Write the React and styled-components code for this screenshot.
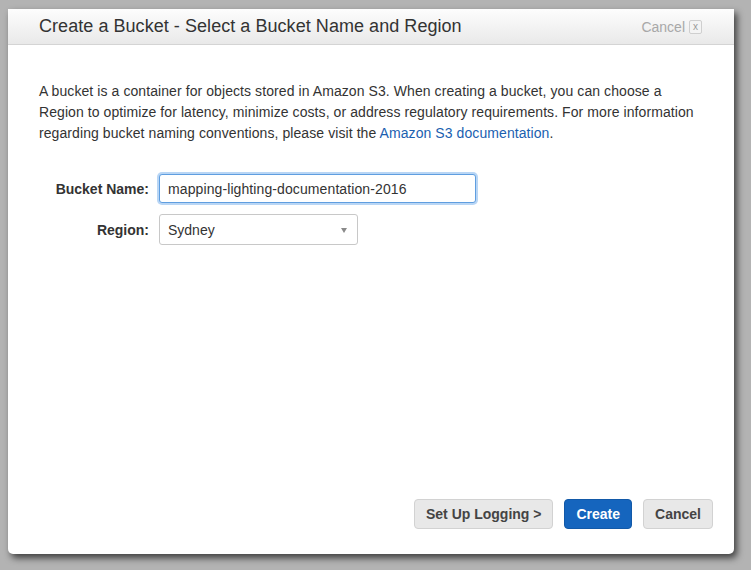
import React from "react";
import styled, { createGlobalStyle } from "styled-components";

const GlobalStyle = createGlobalStyle`
  html, body {
    margin: 0;
    padding: 0;
    background: #b3b3b3;
  }
  body {
    font-family: "Liberation Sans", Arial, sans-serif;
    color: #333;
  }
`;

const Page = styled.div`
  width: 751px;
  height: 570px;
  padding: 9px 0 0 8px;
  box-sizing: border-box;
`;

const Dialog = styled.div`
  width: 726px;
  height: 545px;
  background: #fff;
  border-radius: 0 0 5px 5px;
  box-shadow: 3px 4px 7px rgba(0, 0, 0, 0.65);
  display: flex;
  flex-direction: column;
`;

const Header = styled.header`
  height: 36px;
  box-sizing: border-box;
  padding: 0 32px 0 31px;
  background: linear-gradient(#fdfdfd, #e9e9e9);
  border-bottom: 1px solid #d4d4d4;
  display: flex;
  align-items: center;
  justify-content: space-between;

  h1 {
    margin: 0;
    font-size: 18px;
    font-weight: normal;
    letter-spacing: 0.05px;
    color: #333;
  }
`;

const Dismiss = styled.div`
  display: flex;
  align-items: center;
  gap: 4px;
  color: #a8a8a8;
  font-size: 14px;

  span {
    width: 11px;
    height: 12px;
    border: 1px solid #cfcfcf;
    border-radius: 2px;
    font-size: 10px;
    line-height: 11px;
    text-align: center;
    color: #9a9a9a;
    background: #f4f4f4;
  }
`;

const Body = styled.div`
  flex: 1;
  padding: 36px 31px 25px 31px;
  display: flex;
  flex-direction: column;
`;

const Intro = styled.p`
  margin: 0;
  font-size: 14px;
  line-height: 21px;
  letter-spacing: 0.08px;
  color: #333;

  a {
    color: #1b5fb0;
    text-decoration: none;
  }
`;

const Form = styled.div`
  margin-top: 30px;
  display: grid;
  grid-template-columns: 110px auto;
  column-gap: 10px;
  row-gap: 11px;
  align-items: center;
  justify-items: start;
`;

const Label = styled.label`
  justify-self: end;
  font-size: 14px;
  font-weight: bold;
  color: #333;
`;

const TextInput = styled.input`
  width: 317px;
  height: 29px;
  box-sizing: border-box;
  padding: 0 8px;
  font-family: inherit;
  font-size: 14px;
  letter-spacing: 0.1px;
  color: #333;
  border: 1px solid #5f9ee0;
  border-radius: 3px;
  box-shadow: 0 0 0 2px #b9d6f5;
  outline: none;
`;

const Select = styled.div`
  width: 199px;
  height: 31px;
  box-sizing: border-box;
  padding: 0 8px;
  border: 1px solid #c8c8c8;
  border-radius: 3px;
  display: flex;
  align-items: center;
  justify-content: space-between;
  font-size: 14px;
  color: #333;

  i {
    width: 0;
    height: 0;
    border-left: 3px solid transparent;
    border-right: 3px solid transparent;
    border-top: 5px solid #8a8a8a;
    margin-right: 2px;
    margin-top: 2px;
  }
`;

const Footer = styled.div`
  margin-top: auto;
  margin-right: -10px;
  display: flex;
  justify-content: flex-end;
  gap: 11px;
`;

const Button = styled.button`
  height: 30px;
  padding: 0 11px;
  font-family: inherit;
  font-size: 14px;
  font-weight: bold;
  border-radius: 4px;
  color: ${(p) => (p.$primary ? "#fff" : "#444")};
  background: ${(p) => (p.$primary ? "#1565be" : "#e8e8e8")};
  border: 1px solid ${(p) => (p.$primary ? "#1259a8" : "#d2d2d2")};
`;

export default function App() {
  return (
    <>
      <GlobalStyle />
      <Page>
        <Dialog>
          <Header>
            <h1>Create a Bucket - Select a Bucket Name and Region</h1>
            <Dismiss>
              Cancel <span>x</span>
            </Dismiss>
          </Header>
          <Body>
            <Intro>
              A bucket is a container for objects stored in Amazon S3. When creating a bucket, you can choose a
              <br />
              Region to optimize for latency, minimize costs, or address regulatory requirements. For more information
              <br />
              regarding bucket naming conventions, please visit the <a href="#">Amazon S3 documentation</a>.
            </Intro>
            <Form>
              <Label>Bucket Name:</Label>
              <TextInput defaultValue="mapping-lighting-documentation-2016" />
              <Label>Region:</Label>
              <Select>
                Sydney <i />
              </Select>
            </Form>
            <Footer>
              <Button>Set Up Logging &gt;</Button>
              <Button $primary>Create</Button>
              <Button>Cancel</Button>
            </Footer>
          </Body>
        </Dialog>
      </Page>
    </>
  );
}
